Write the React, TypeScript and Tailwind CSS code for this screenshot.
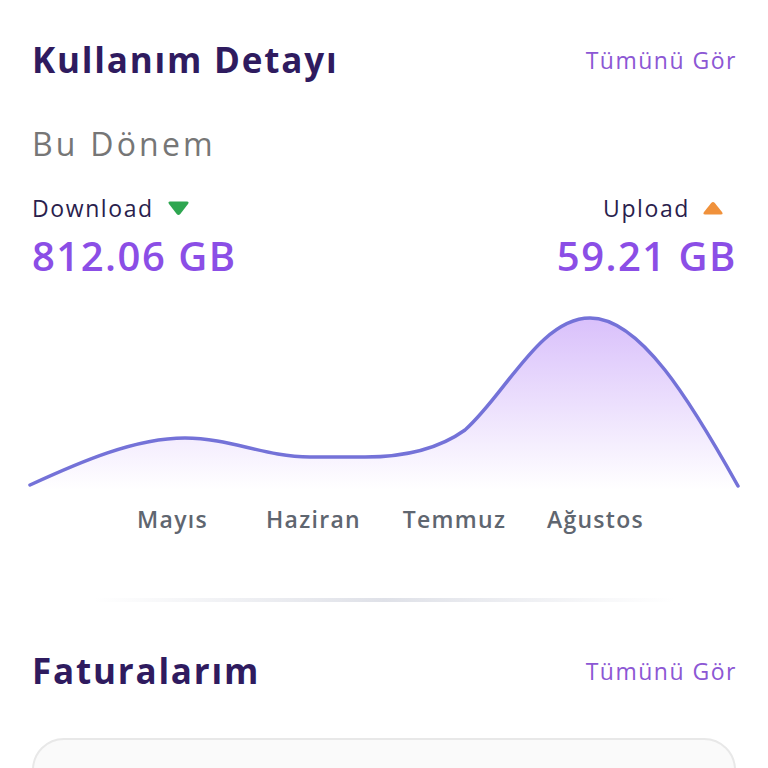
const months = ['Mayıs', 'Haziran', 'Temmuz', 'Ağustos'];

function TriangleDown({ className }: { className?: string }) {
  return (
    <svg className={className} width="23" height="16" viewBox="0 0 23 16">
      <path d="M3 1.5 H20 Q22.5 1.5 21 4 L13.3 14 Q11.5 16 9.7 14 L2 4 Q0.5 1.5 3 1.5 Z" fill="#2ea650" />
    </svg>
  );
}

function TriangleUp({ className }: { className?: string }) {
  return (
    <svg className={className} width="22" height="15" viewBox="0 0 22 15">
      <path d="M3 13.5 H19 Q21.5 13.5 20 11 L12.8 2 Q11 0 9.2 2 L2 11 Q0.5 13.5 3 13.5 Z" fill="#f0913b" />
    </svg>
  );
}

function UsageChart() {
  const line =
    'M30 485 C80 462 135 438 185 438 C230 438 265 457 310 457 L365 457 C405 457 440 448 465 430 C505 395 540 318 590 318 C640 318 690 400 738 486';
  return (
    <svg className="block" width="768" height="200" viewBox="0 300 768 200">
      <defs>
        <linearGradient id="fill" x1="0" y1="0" x2="0" y2="1">
          <stop offset="0%" stopColor="#d9c0fb" />
          <stop offset="100%" stopColor="#ffffff" />
        </linearGradient>
      </defs>
      <path d={`${line} L738 490 L30 490 Z`} fill="url(#fill)" />
      <path d={line} fill="none" stroke="#7472d8" strokeWidth="3.5" strokeLinecap="round" />
    </svg>
  );
}

export default function App() {
  return (
    <div className="w-[768px] h-[768px] overflow-hidden bg-white" style={{ fontFamily: '"Open Sans", "Noto Sans", sans-serif' }}>
      <div className="px-8 pt-[38px]">
        <div className="flex items-center justify-between">
          <h1 className="text-[35px] leading-[44px] font-bold tracking-[1.8px] text-[#2f1b5f]">Kullanım Detayı</h1>
          <span className="-mr-[1px] text-[23px] leading-[30px] tracking-[1.5px] text-[#8c57d4]">Tümünü Gör</span>
        </div>

        <p className="mt-[41px] text-[32px] leading-[42px] tracking-[3.2px] text-[#767676]">Bu Dönem</p>

        <div className="mt-[27px] flex justify-between">
          <div className="flex flex-col">
            <div className="flex items-center gap-[13px] text-[23px] leading-[32px] tracking-[1.6px] text-[#2a1e4d]">
              Download
              <TriangleDown />
            </div>
            <span className="mt-[9px] text-[40px] leading-[46px] font-semibold tracking-[1.5px] text-[#8b4ee6]">812.06 GB</span>
          </div>
          <div className="flex flex-col items-end">
            <div className="mr-[12px] flex items-center gap-[12px] text-[23px] leading-[32px] tracking-[1.6px] text-[#2a1e4d]">
              Upload
              <TriangleUp />
            </div>
            <span className="-mr-[1px] mt-[9px] text-[40px] leading-[46px] font-semibold tracking-[1.5px] text-[#8b4ee6]">59.21 GB</span>
          </div>
        </div>
      </div>

      <div className="mt-[21px]">
        <UsageChart />
      </div>

      <div className="ml-[102px] grid w-[564px] grid-cols-4 mt-[3px]">
        {months.map((m) => (
          <span key={m} className="text-center text-[23px] leading-[32px] font-semibold tracking-[1.3px] text-[#5f6670]">
            {m}
          </span>
        ))}
      </div>

      <div className="mx-auto mt-[63px] h-[4px] w-[582px] rounded-full bg-gradient-to-r from-transparent via-[#dfe1e8] to-transparent" />

      <div className="px-8 mt-[46px]">
        <div className="flex items-center justify-between">
          <h2 className="text-[35px] leading-[46px] font-bold tracking-[1.8px] text-[#2f1b5f]">Faturalarım</h2>
          <span className="-mr-[1px] text-[23px] leading-[30px] tracking-[1.5px] text-[#8c57d4]">Tümünü Gör</span>
        </div>
        <div className="mt-[44px] h-[120px] rounded-[32px] border-2 border-[#e8e8e8] bg-[#fafafa]" />
      </div>
    </div>
  );
}
